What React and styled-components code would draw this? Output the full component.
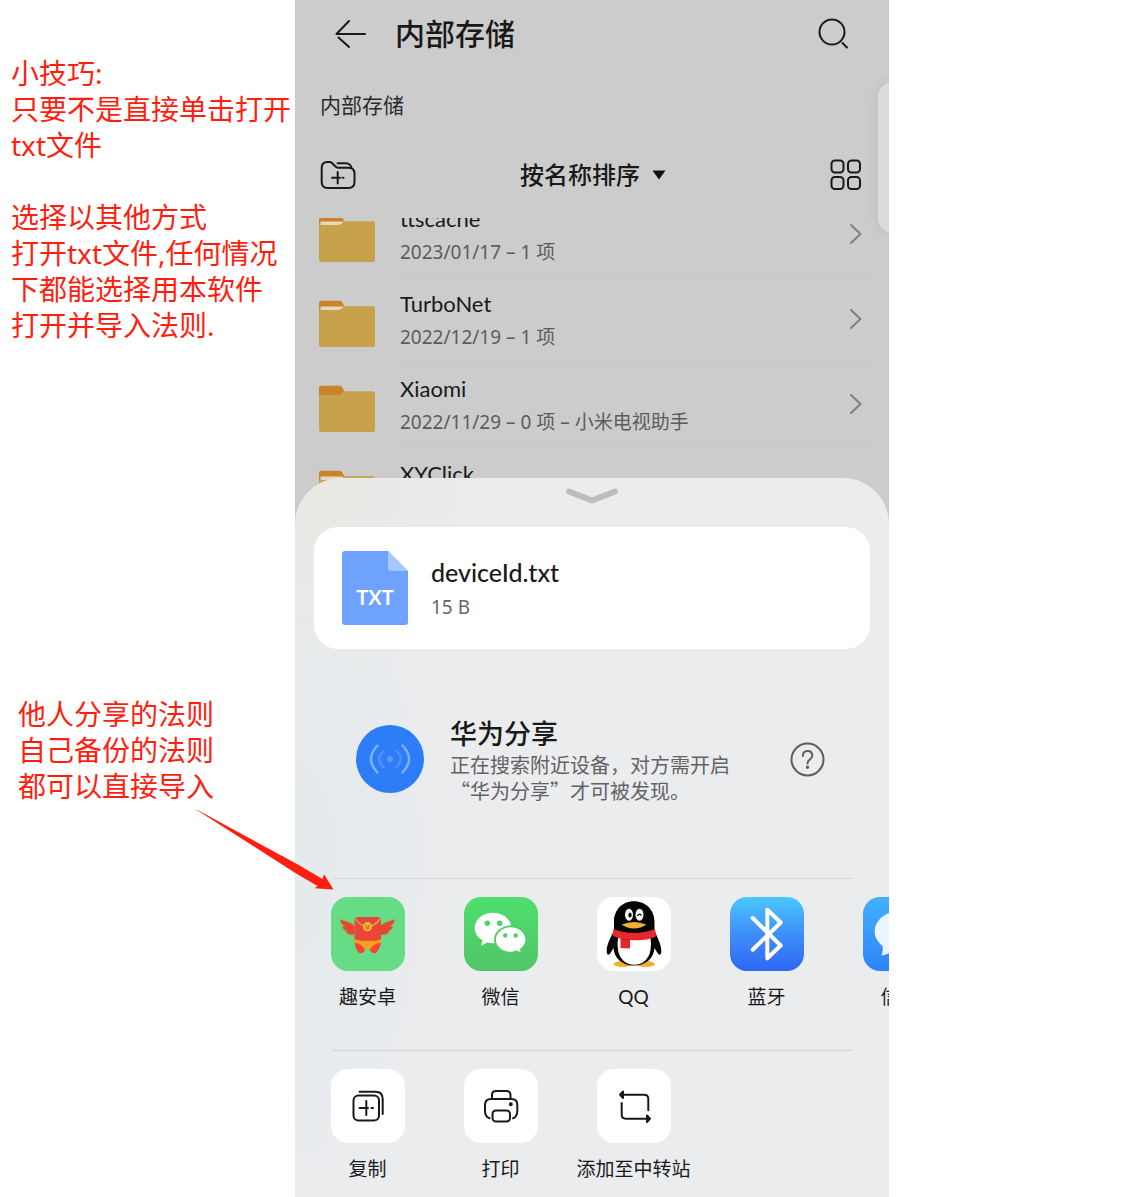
import React from "react";
import styled, { createGlobalStyle } from "styled-components";

const GlobalStyle = createGlobalStyle`
  *, *::before, *::after { box-sizing: border-box; }
  body {
    margin: 0;
    background: #fff;
    color: #191919;
    font-family: "Noto Sans", "Noto Sans CJK SC", sans-serif;
  }
  h1, h2, p, ul { margin: 0; padding: 0; }
  ul { list-style: none; }
  button {
    margin: 0;
    padding: 0;
    border: 0;
    background: none;
    color: inherit;
    font: inherit;
    text-align: inherit;
    cursor: pointer;
  }
  svg { display: block; flex: none; }
`;

const Page = styled.div`
  display: grid;
  grid-template-columns: minmax(0, 295fr) minmax(0, 594fr) minmax(0, 233fr);
  min-height: 100vh;
`;

/* Notes beside the phone */
const Notes = styled.aside`
  position: relative;
  z-index: 3;
  display: flex;
  flex-direction: column;
  gap: 353px;
  padding-top: 55px;
  color: #ff1e10;
`;

const Note = styled.p`
  padding-left: ${(p) => p.$indent}px;
  font-size: 28px;
  line-height: 36px;
  white-space: pre;
`;

const Arrow = styled.svg`
  position: absolute;
  top: 808px;
  right: -40px;
`;

/* Phone */
const Phone = styled.main`
  position: relative;
  display: flex;
  flex-direction: column;
  overflow: hidden;
  background: #ccc;
`;

const TitleBar = styled.header`
  display: flex;
  align-items: center;
  gap: 28px;
  height: 68px;
  padding: 0 40px;
`;

const Title = styled.h1`
  flex: 1;
  font-size: 30px;
  font-weight: 500;
  line-height: 40px;
`;

const Breadcrumb = styled.p`
  padding: 22px 25px 0;
  font-size: 21px;
  line-height: 30px;
  color: #2a2a2a;
`;

const Toolbar = styled.div`
  display: flex;
  align-items: center;
  justify-content: space-between;
  height: 98px;
  padding: 12px 27px 0 25px;
`;

const SortButton = styled.button`
  display: flex;
  align-items: center;
  gap: 12px;
  font-size: 24px;
  font-weight: 500;
  line-height: 34px;
`;

const FileList = styled.ul`
  height: 276px;
  overflow: hidden;
`;

const FileItem = styled.li`
  &:first-child { margin-top: -27px; }
`;

const FileRow = styled.button`
  display: flex;
  gap: 25px;
  width: 100%;
  height: 85px;
  padding-left: 24px;

  > svg:first-child { margin-top: 24px; }
`;

const FileBody = styled.span`
  display: flex;
  flex: 1;
  justify-content: space-between;
  height: 100%;
  margin-right: 20px;
  padding: 11px 6px 0 0;
  border-bottom: 1px solid #c7c7c7;

  > svg { margin-top: 21px; }
`;

const FileText = styled.span`
  display: flex;
  flex-direction: column;
`;

const FileName = styled.span`
  font-family: Lato, "Noto Sans CJK SC", sans-serif;
  font-size: 22px;
  line-height: 34px;
`;

const FileMeta = styled.span`
  font-size: 19px;
  line-height: 32px;
  color: #5c5c5c;
`;

const SideTab = styled.div`
  position: absolute;
  top: 82px;
  right: -19px;
  width: 30px;
  height: 151px;
  border-radius: 20px;
  background: #dcdcdc;
  box-shadow: 0 0 14px rgba(0, 0, 0, 0.08);
`;

/* Share sheet */
const Sheet = styled.section`
  position: relative;
  flex: 1;
  margin-top: -16px;
  border-radius: 46px 46px 0 0;
  background:
    radial-gradient(circle at 0 0, #e8e9e3 0, rgba(232, 233, 227, 0) 220px),
    radial-gradient(ellipse 180px 420px at 0 380px, #e5eaed 0, rgba(229, 234, 237, 0) 100%),
    #ebecee;
`;

const Handle = styled.button`
  display: block;
  width: 52px;
  height: 49px;
  margin: 0 auto;

  svg { margin-top: -14px; }
`;

const FileCard = styled.article`
  display: flex;
  align-items: center;
  gap: 23px;
  height: 122px;
  margin: 0 19px;
  padding: 0 28px;
  border-radius: 24px;
  background: #fff;
`;

const CardName = styled.h2`
  font-family: Lato, "Noto Sans CJK SC", sans-serif;
  font-size: 25px;
  font-weight: 500;
  line-height: 38px;
`;

const CardSize = styled.p`
  font-size: 19px;
  line-height: 32px;
  color: #666;
`;

const ShareDevice = styled.div`
  display: flex;
  align-items: center;
  gap: 26px;
  height: 229px;
  padding: 0 64px 9px 61px;
`;

const ShareText = styled.div`
  flex: 1;
  font-family: "Noto Sans CJK SC", sans-serif;
`;

const ShareTitle = styled.h2`
  font-size: 27px;
  font-weight: 500;
  line-height: 38px;
`;

const ShareHint = styled.p`
  font-size: 20px;
  line-height: 26px;
  color: #626365;
  white-space: pre-line;
`;

const AppRow = styled.ul`
  display: flex;
  height: ${(p) => p.$height}px;
  padding: 19px 0 0 6px;
  overflow: hidden;

  &::before {
    content: "";
    position: absolute;
    right: 37px;
    left: 37px;
    height: 1px;
    margin-top: -19px;
    background: #d2d4d6;
  }
`;

const AppItem = styled.li`
  flex: none;
  width: 133px;
`;

const AppButton = styled.button`
  display: flex;
  flex-direction: column;
  align-items: center;
  gap: 12px;
  width: 100%;
  font-family: Lato, "Noto Sans CJK SC", sans-serif;
  font-size: 19px;
  line-height: 28px;
  white-space: nowrap;
`;

const Tile = styled.span`
  display: block;
  width: 74px;
  height: 74px;
  overflow: hidden;
  border-radius: 17px;
  background: ${(p) => p.$fill};
`;

const Line = ({ w, h, width = 2, color = "#191919", children }) => (
  <svg
    width={w}
    height={h}
    viewBox={`0 0 ${w} ${h}`}
    fill="none"
    stroke={color}
    strokeWidth={width}
    strokeLinecap="round"
    strokeLinejoin="round"
    aria-hidden="true"
  >
    {children}
  </svg>
);

const FolderIcon = ({ empty }) => (
  <svg width="56" height="47" viewBox="0 0 56 47" aria-hidden="true">
    <path d="M0 3Q0 .7 2.200 .7H21Q22.300 .7 23 2L25.300 6.300V12H0Z" fill="#c88429" />
    {!empty && <rect x="1.500" y="6.500" width="23" height="5" fill="#e6d8c0" />}
    <path d="M0 10H19Q21.500 10 23 8.300L24 7.200Q25 6.300 26 6.300H54Q56 6.300 56 8.300V45Q56 47 54 47H2Q0 47 0 45Z" fill="#c8a24b" />
  </svg>
);

const TxtIcon = () => (
  <svg width="66" height="74" viewBox="0 0 66 74" role="img" aria-label="TXT">
    <path d="M3 0H46L66 20V71Q66 74 63 74H3Q0 74 0 71V3Q0 0 3 0Z" fill="#6ea2fe" />
    <path d="M46 0L66 20H49Q46 20 46 17Z" fill="#a6c7ff" />
    <text x="33" y="54" textAnchor="middle" fill="#fff" fontFamily="Lato, sans-serif" fontSize="20" fontWeight="700">TXT</text>
  </svg>
);

const PacketIcon = () => (
  <svg width="74" height="74" viewBox="0 0 74 74" aria-hidden="true">
    <defs>
      <linearGradient id="packet" x1="0" y1="0" x2="0" y2="1">
        <stop offset="0" stopColor="#dd4a3f" />
        <stop offset="1" stopColor="#fa4330" />
      </linearGradient>
    </defs>
    <g fill="#e8452f" stroke="#b98a3c" strokeWidth=".6">
      <path d="M9.300 22.500C13 24 20 25 23.500 29V37.500C20 38.500 16 37 14.500 34.500C15.500 34.500 16 34.300 16 34C13 33.500 11.500 31.500 11.500 29.800L14 29.500C11 27.500 9.500 25.500 9.300 22.500Z" />
      <path d="M63.700 22.500C60 24 53 25 49.500 29V37.500C53 38.500 57 37 58.500 34.500C57.500 34.500 57 34.300 57 34C60 33.500 61.500 31.500 61.500 29.800L59 29.500C62 27.500 63.500 25.500 63.700 22.500Z" />
    </g>
    <path d="M27 20H46.500Q50 20 50 23.500V43Q50 51 45 56Q39 57.500 38.500 50H34.500Q34 57.500 28 56Q23.500 51 23.500 43V23.500Q23.500 20 27 20Z" fill="url(#packet)" />
    <path d="M23.500 42.500Q36.500 45.500 50 42.500V46Q43 46 40 51.500H33Q30 46 23.500 46Z" fill="#f6a11f" />
    <path d="M24.500 22Q29 29 36.500 29.700Q44 29 49 22" fill="none" stroke="#f2a63a" strokeWidth="1.300" />
    <circle cx="36.500" cy="29.700" r="4.600" fill="#f7b53a" />
    <path d="M34.300 27.500L35.300 29V32H37.700V29L38.700 27.500M35 30H38" fill="none" stroke="#c5671f" strokeWidth="1" />
  </svg>
);

const WechatIcon = () => (
  <svg width="74" height="74" viewBox="0 0 74 74" aria-hidden="true">
    <path d="M29 15.700C39.300 15.700 47.300 22.500 47.300 31S39.300 46.300 29 46.300Q26 46.300 23.500 45.600L17.300 48.500L18.500 43.300C13.500 40.300 10.700 36 10.700 31C10.700 22.500 18.700 15.700 29 15.700Z" fill="#fff" />
    <path d="M46.700 29.300C55.300 29.300 62.300 35.300 62.300 42.700Q62.300 48 57 52.300L57.500 56.600L52.300 54.300Q49.500 55.700 46.700 55.700C38 55.700 31 50 31 42.700S38 29.300 46.700 29.300Z" fill="#fff" stroke="#50ce69" strokeWidth="1.800" />
    <g fill="#50ce69">
      <circle cx="23.300" cy="26.300" r="2.700" />
      <circle cx="35.700" cy="26.300" r="2.700" />
      <circle cx="41.300" cy="38.500" r="2.200" />
      <circle cx="51.700" cy="38.500" r="2.200" />
    </g>
  </svg>
);

const QqIcon = () => (
  <svg width="74" height="74" viewBox="0 0 74 74" aria-hidden="true">
    <ellipse cx="26" cy="67" rx="9.500" ry="3" fill="#f4ad2d" />
    <ellipse cx="48.500" cy="67" rx="9.500" ry="3" fill="#f4ad2d" />
    <path d="M37 4.300C49 4.300 57.500 13 57.500 25V34C60 39 64 47 64.300 53C64.500 58 62.500 59 60.500 56L57.500 51C57 61 49 68.500 37 68.500S17 61 16.500 51L13.500 56C11.500 59 9.500 58 9.700 53C10 47 14 39 17 34V25C17 13 25 4.300 37 4.300Z" fill="#050505" />
    <path d="M21 41H53.500Q54.500 47 53.500 53C52 62 46 67.700 37.300 67.700S22.500 62 21 53Q20 47 21 41Z" fill="#fff" />
    <path d="M16.500 32Q37 40 58 32L59 39.500Q48 44.500 33 43V51.500L23.500 51V41.500Q18 40 15.500 38.500Z" fill="#e8272d" />
    <path d="M23.500 41.500Q28 42.700 33 43" fill="none" stroke="#b9161d" strokeWidth=".8" />
    <ellipse cx="32" cy="17.700" rx="4" ry="6" fill="#fff" />
    <ellipse cx="42.500" cy="17.700" rx="4" ry="6" fill="#fff" />
    <ellipse cx="33" cy="18" rx="1.700" ry="2.600" fill="#050505" />
    <path d="M40.500 19Q42.300 15.500 44.500 18.500" fill="none" stroke="#050505" strokeWidth="1.400" />
    <path d="M24.700 27.500Q37 22.500 49.300 27.500Q44 31.500 37 31.500T24.700 27.500Z" fill="#f4ad2d" />
  </svg>
);

const BluetoothIcon = () => (
  <Line w={74} h={74} width={4} color="#fff">
    <path d="M22.700 21L50.700 48.500L37.300 61.300V12.700L50.700 25.500L22.700 52.700" />
  </Line>
);

const MessageIcon = () => (
  <svg width="74" height="74" viewBox="0 0 74 74" aria-hidden="true">
    <path d="M37 14C51 14 62.300 23 62.300 34.500S51 55 37 55Q33 55 29 54Q25 58 18.300 58.500Q20.500 54.500 19.500 49C14.500 45 11.700 40 11.700 34.500C11.700 23 23 14 37 14Z" fill="#eaf6ff" />
  </svg>
);

const CopyIcon = () => (
  <Line w={74} h={74}>
    <rect x="22.500" y="26.500" width="25.500" height="25" rx="5" />
    <path d="M28.500 22.800H44.500Q51.700 22.800 51.700 30V45" width="2" />
    <path d="M35.300 32V46M28.500 39H37M40.500 39H42" />
  </Line>
);

const PrintIcon = () => (
  <Line w={74} h={74}>
    <path d="M28 30V26Q28 22 32 22H42.500Q46.500 22 46.500 26V30" />
    <path d="M25.500 49.300Q21 47.500 21 42V36Q21 30 27 30H47.500Q53.300 30 53.300 36V42Q53.300 47.500 49 49.300" />
    <rect x="28.500" y="41.500" width="17.500" height="11" rx="3.500" />
    <circle cx="46.800" cy="35.300" r="1" fill="#191919" />
  </Line>
);

const TransferIcon = () => (
  <Line w={74} h={74}>
    <path d="M26 25.700H47Q51.300 25.700 51.300 30V41.300M24.700 34V45.500Q24.700 49.700 29 49.700H50" />
    <path d="M23 25.700L26 22.500V29ZM53 49.700L50 46.500V53Z" fill="#191919" />
  </Line>
);

const files = [
  { name: "ttscache", meta: "2023/01/17 – 1 项" },
  { name: "TurboNet", meta: "2022/12/19 – 1 项" },
  { name: "Xiaomi", meta: "2022/11/29 – 0 项 – 小米电视助手", empty: true },
  { name: "XYClick" },
];

const apps = [
  { name: "趣安卓", fill: "#66dc87", icon: <PacketIcon /> },
  { name: "微信", fill: "linear-gradient(#4fdf6d, #50c567)", icon: <WechatIcon /> },
  { name: "QQ", fill: "#fff", icon: <QqIcon /> },
  { name: "蓝牙", fill: "linear-gradient(#4ac8ff, #3f8ff8 50%, #2f67f2)", icon: <BluetoothIcon /> },
  { name: "信息", fill: "linear-gradient(#41b1fd, #3083fa)", icon: <MessageIcon /> },
];

const actions = [
  { name: "复制", fill: "#fff", icon: <CopyIcon /> },
  { name: "打印", fill: "#fff", icon: <PrintIcon /> },
  { name: "添加至中转站", fill: "#fff", icon: <TransferIcon /> },
];

const Apps = ({ items, height }) => (
  <AppRow $height={height}>
    {items.map((a) => (
      <AppItem key={a.name}>
        <AppButton type="button">
          <Tile $fill={a.fill}>{a.icon}</Tile>
          {a.name}
        </AppButton>
      </AppItem>
    ))}
  </AppRow>
);

export default function App() {
  return (
    <>
      <GlobalStyle />
      <Page>
        <Notes>
          <Note $indent={11}>
            {"小技巧:\n只要不是直接单击打开\ntxt文件\n\n选择以其他方式\n打开txt文件,任何情况\n下都能选择用本软件\n打开并导入法则."}
          </Note>
          <Note $indent={18}>{"他人分享的法则\n自己备份的法则\n都可以直接导入"}</Note>
          <Arrow width="140" height="84" viewBox="0 0 140 84" aria-hidden="true">
            <path d="M1 1.500L2.500 2L102 56L127.500 71L129 66.300L138.500 81.500L119.700 80.300L122.500 78L102 66Z" fill="#ff1e10" />
          </Arrow>
        </Notes>

        <Phone>
          <TitleBar>
            <button type="button" aria-label="返回">
              <Line w={32} h={30}>
                <path d="M30 15H1.500L14 2M3.500 18.500L14 28" />
              </Line>
            </button>
            <Title>内部存储</Title>
            <button type="button" aria-label="搜索">
              <Line w={32} h={32}>
                <circle cx="15" cy="14" r="12.500" />
                <path d="M25.500 25L30 29.500" />
              </Line>
            </button>
          </TitleBar>
          <Breadcrumb>内部存储</Breadcrumb>
          <Toolbar>
            <button type="button" aria-label="新建文件夹">
              <Line w={36} h={30}>
                <path d="M7.500 2H9.500Q11 2 12 3L15.500 6.500Q16.700 7.700 18 7.700H28.500Q34.500 7.700 34.500 13.500V22Q34.500 28 28.500 28H7.700Q1.700 28 1.700 22V8Q1.700 2 7.500 2Z" />
                <path d="M17.500 3.300H26Q30.500 3.500 31.500 8M17.700 12V23.500M12 17.700H20M22.500 17.700H23.500" />
              </Line>
            </button>
            <SortButton type="button">
              按名称排序
              <svg width="14" height="10" viewBox="0 0 14 10" aria-hidden="true">
                <path d="M.5 .5H13.500L7 9.500Z" fill="#111" />
              </svg>
            </SortButton>
            <button type="button" aria-label="网格视图">
              <Line w={32} h={32}>
                <rect x="1.500" y="1.500" width="12" height="12" rx="3.500" />
                <rect x="18" y="1.500" width="12" height="12" rx="3.500" />
                <rect x="1.500" y="18" width="12" height="12" rx="3.500" />
                <rect x="18" y="18" width="12" height="12" rx="3.500" />
              </Line>
            </button>
          </Toolbar>

          <FileList>
            {files.map((f) => (
              <FileItem key={f.name}>
                <FileRow type="button">
                  <FolderIcon empty={f.empty} />
                  <FileBody>
                    <FileText>
                      <FileName>{f.name}</FileName>
                      {f.meta && <FileMeta>{f.meta}</FileMeta>}
                    </FileText>
                    <Line w={14} h={22} color="#808080">
                      <path d="M2 2L11.500 11L2 20" />
                    </Line>
                  </FileBody>
                </FileRow>
              </FileItem>
            ))}
          </FileList>
          <SideTab />

          <Sheet>
            <Handle type="button" aria-label="收起">
              <Line w={52} h={16} width={6} color="#bcbdbf">
                <path d="M3 3.500L26 12.500L49 3.500" />
              </Line>
            </Handle>
            <FileCard>
              <TxtIcon />
              <div>
                <CardName>deviceId.txt</CardName>
                <CardSize>15 B</CardSize>
              </div>
            </FileCard>
            <ShareDevice>
              <svg width="68" height="68" viewBox="0 0 68 68" fill="none" strokeWidth="2.400" strokeLinecap="round" aria-hidden="true">
                <circle cx="34" cy="34" r="34" fill="#2e7df8" />
                <circle cx="34" cy="34" r="3" fill="#5b9cfb" />
                <path d="M27.500 26Q19 34 27.500 42M40.500 26Q49 34 40.500 42" stroke="#4f93fa" />
                <path d="M21.500 20.500Q8.500 34 21.500 47.500M46.500 20.500Q59.500 34 46.500 47.500" stroke="#7db4ff" />
              </svg>
              <ShareText>
                <ShareTitle>华为分享</ShareTitle>
                <ShareHint>{"正在搜索附近设备，对方需开启\n“华为分享”才可被发现。"}</ShareHint>
              </ShareText>
              <button type="button" aria-label="帮助">
                <Line w={35} h={35} color="#5d5e60">
                  <circle cx="17.500" cy="17.500" r="16" />
                  <path d="M12.800 14Q12.800 9 17.500 9T22.300 13.500Q22.300 16 19.500 17.800Q17.500 19 17.500 21.500" />
                  <circle cx="17.500" cy="25.300" r=".7" fill="#5d5e60" />
                </Line>
              </button>
            </ShareDevice>
            <Apps items={apps} height={172} />
            <Apps items={actions} height={147} />
          </Sheet>
        </Phone>
      </Page>
    </>
  );
}
